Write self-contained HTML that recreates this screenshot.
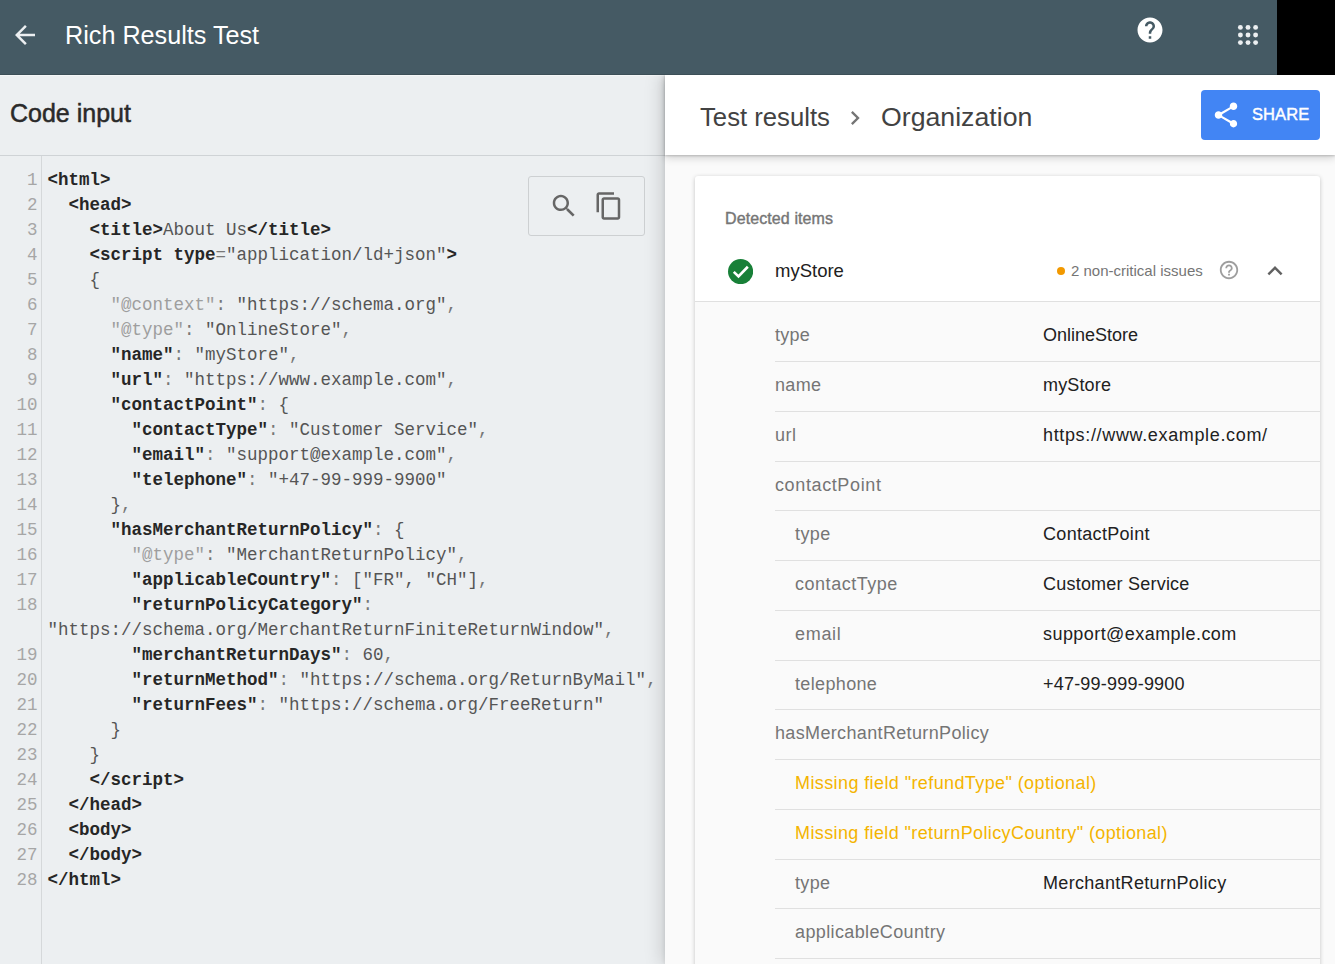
<!DOCTYPE html>
<html><head><meta charset="utf-8">
<style>
*{box-sizing:border-box;margin:0;padding:0}
html,body{width:1335px;height:964px;overflow:hidden;background:#fafafa;font-family:"Liberation Sans",sans-serif}
.abs{position:absolute}
#top{left:0;top:0;width:1335px;height:75px;background:#455a64;z-index:5;box-shadow:inset 0 -1px 0 rgba(0,0,0,.12)}
#blk{left:1277px;top:0;width:58px;height:75px;background:#000}
#title{left:65px;top:20px;font-size:25.2px;color:#fff;white-space:nowrap;line-height:30px}
#left{left:0;top:75px;width:665px;height:889px;background:#eceff1}
#codehdr{left:10px;top:23px;font-size:25px;color:#2a2a2a;line-height:30px;-webkit-text-stroke:0.5px #2a2a2a;white-space:nowrap}
#hdrline{left:0;top:80px;width:665px;height:1px;background:#cfd3d6}
#gutline{left:41px;top:81px;width:1px;height:808px;background:#d5d8da}
#code{left:0;top:93px;font-family:"Liberation Mono",monospace;font-size:17.5px;line-height:25px;white-space:pre}
.ln{position:absolute;left:0;width:37.5px;text-align:right;color:#a6a6a6}
.cl{position:absolute;left:47.5px;color:#555}
.b{font-weight:bold;color:#262626}
.g{color:#9e9e9e}
.p{color:#777}
#tools{left:528px;top:101px;width:117px;height:60px;border:1px solid #cdd0d2;border-radius:3px}
#right{left:665px;top:75px;width:670px;height:889px;background:#fafafa;box-shadow:-1px 0 4px rgba(0,0,0,.08),-5px 0 16px rgba(0,0,0,.13)}
#rhdr{left:0;top:0;width:670px;height:80px;background:#fff;box-shadow:0 1px 2px rgba(0,0,0,.18),0 3px 8px rgba(0,0,0,.16);z-index:2}
.crumb{top:26.5px;font-size:26px;color:#424242;line-height:30px;white-space:nowrap}
#share{left:536px;top:15px;width:119px;height:50px;background:#4285f4;border-radius:4px}
#sharetxt{left:51px;top:14px;font-size:16.5px;color:#fff;-webkit-text-stroke:0.45px #fff;letter-spacing:0.1px;line-height:20px}
#card{left:30px;top:101px;width:625px;height:800px;background:#fff;border-radius:3px;box-shadow:0 1px 4px rgba(0,0,0,.22);overflow:hidden}
#det{left:30px;top:33px;font-size:16px;letter-spacing:0.1px;line-height:20px;color:#757575;-webkit-text-stroke:0.4px #757575;white-space:nowrap}
#ms{left:80px;top:84.5px;font-size:18.5px;line-height:20px;color:#212121;white-space:nowrap}
#iss{left:376px;top:84.8px;font-size:15px;line-height:20px;color:#757575;white-space:nowrap}
#div0{left:0;top:125px;width:625px;height:1px;background:#e0e0e0}
#tbl{left:0;top:126px;width:625px;height:700px;background:#fafafa}
.tr{position:absolute;left:80px;width:545px;height:49.75px;border-bottom:1px solid #e0e0e0}
.lab{position:absolute;top:13.2px;font-size:18px;line-height:20px;color:#757575;white-space:nowrap}
.val{position:absolute;left:268px;top:13.2px;font-size:18px;line-height:20px;color:#212121;white-space:nowrap}
.warn{color:#f4b400}
</style></head><body>
<div id="top" class="abs">
  <svg class="abs" style="left:10px;top:20px" width="30" height="30" viewBox="0 0 24 24"><path fill="#eceff1" d="M20 11H7.83l5.59-5.59L12 4l-8 8 8 8 1.41-1.41L7.83 13H20v-2z"/></svg>
  <div id="title" class="abs">Rich Results Test</div>
  <svg class="abs" style="left:1135px;top:15px" width="30" height="30" viewBox="0 0 24 24"><path fill="#fff" d="M12 2C6.48 2 2 6.48 2 12s4.48 10 10 10 10-4.48 10-10S17.52 2 12 2zm1 17h-2v-2h2v2zm2.07-7.75l-.9.92C13.45 12.9 13 13.5 13 15h-2v-.5c0-1.1.45-2.1 1.17-2.83l1.24-1.26c.37-.36.59-.86.59-1.41 0-1.1-.9-2-2-2s-2 .9-2 2H8c0-2.21 1.79-4 4-4s4 1.79 4 4c0 .88-.36 1.68-.93 2.25z"/></svg>
  <svg class="abs" style="left:1233px;top:20px" width="30" height="30" viewBox="0 0 30 30" fill="#eceff1">
    <circle cx="7.4" cy="7.4" r="2.45"/><circle cx="15" cy="7.4" r="2.45"/><circle cx="22.6" cy="7.4" r="2.45"/>
    <circle cx="7.4" cy="15" r="2.45"/><circle cx="15" cy="15" r="2.45"/><circle cx="22.6" cy="15" r="2.45"/>
    <circle cx="7.4" cy="22.6" r="2.45"/><circle cx="15" cy="22.6" r="2.45"/><circle cx="22.6" cy="22.6" r="2.45"/>
  </svg>
  <div id="blk" class="abs"></div>
</div>

<div id="left" class="abs">
  <div id="codehdr" class="abs">Code input</div>
  <div id="hdrline" class="abs"></div>
  <div class="abs" style="left:0;top:0;width:665px;height:1px;background:#f4f6f7"></div>
  <div id="gutline" class="abs"></div>
  <div id="code" class="abs">
<div class="ln" style="top:0px">1</div>
<div class="cl" style="top:0px"><span class="b">&lt;html&gt;</span></div>
<div class="ln" style="top:25px">2</div>
<div class="cl" style="top:25px">  <span class="b">&lt;head&gt;</span></div>
<div class="ln" style="top:50px">3</div>
<div class="cl" style="top:50px">    <span class="b">&lt;title&gt;</span>About Us<span class="b">&lt;/title&gt;</span></div>
<div class="ln" style="top:75px">4</div>
<div class="cl" style="top:75px">    <span class="b">&lt;script type</span><span class="p">=</span>&quot;application/ld+json&quot;<span class="b">&gt;</span></div>
<div class="ln" style="top:100px">5</div>
<div class="cl" style="top:100px">    {</div>
<div class="ln" style="top:125px">6</div>
<div class="cl" style="top:125px">      <span class="g">&quot;@context&quot;</span><span class="p">: </span>&quot;https://schema.org&quot;<span class="p">,</span></div>
<div class="ln" style="top:150px">7</div>
<div class="cl" style="top:150px">      <span class="g">&quot;@type&quot;</span><span class="p">: </span>&quot;OnlineStore&quot;<span class="p">,</span></div>
<div class="ln" style="top:175px">8</div>
<div class="cl" style="top:175px">      <span class="b">&quot;name&quot;</span><span class="p">: </span>&quot;myStore&quot;<span class="p">,</span></div>
<div class="ln" style="top:200px">9</div>
<div class="cl" style="top:200px">      <span class="b">&quot;url&quot;</span><span class="p">: </span>&quot;https://www.example.com&quot;<span class="p">,</span></div>
<div class="ln" style="top:225px">10</div>
<div class="cl" style="top:225px">      <span class="b">&quot;contactPoint&quot;</span><span class="p">: </span>{</div>
<div class="ln" style="top:250px">11</div>
<div class="cl" style="top:250px">        <span class="b">&quot;contactType&quot;</span><span class="p">: </span>&quot;Customer Service&quot;<span class="p">,</span></div>
<div class="ln" style="top:275px">12</div>
<div class="cl" style="top:275px">        <span class="b">&quot;email&quot;</span><span class="p">: </span>&quot;support@example.com&quot;<span class="p">,</span></div>
<div class="ln" style="top:300px">13</div>
<div class="cl" style="top:300px">        <span class="b">&quot;telephone&quot;</span><span class="p">: </span>&quot;+47-99-999-9900&quot;</div>
<div class="ln" style="top:325px">14</div>
<div class="cl" style="top:325px">      }<span class="p">,</span></div>
<div class="ln" style="top:350px">15</div>
<div class="cl" style="top:350px">      <span class="b">&quot;hasMerchantReturnPolicy&quot;</span><span class="p">: </span>{</div>
<div class="ln" style="top:375px">16</div>
<div class="cl" style="top:375px">        <span class="g">&quot;@type&quot;</span><span class="p">: </span>&quot;MerchantReturnPolicy&quot;<span class="p">,</span></div>
<div class="ln" style="top:400px">17</div>
<div class="cl" style="top:400px">        <span class="b">&quot;applicableCountry&quot;</span><span class="p">: </span>[&quot;FR&quot;, &quot;CH&quot;]<span class="p">,</span></div>
<div class="ln" style="top:425px">18</div>
<div class="cl" style="top:425px">        <span class="b">&quot;returnPolicyCategory&quot;</span><span class="p">:</span></div>
<div class="cl" style="top:450px">&quot;https://schema.org/MerchantReturnFiniteReturnWindow&quot;<span class="p">,</span></div>
<div class="ln" style="top:475px">19</div>
<div class="cl" style="top:475px">        <span class="b">&quot;merchantReturnDays&quot;</span><span class="p">: </span>60<span class="p">,</span></div>
<div class="ln" style="top:500px">20</div>
<div class="cl" style="top:500px">        <span class="b">&quot;returnMethod&quot;</span><span class="p">: </span>&quot;https://schema.org/ReturnByMail&quot;<span class="p">,</span></div>
<div class="ln" style="top:525px">21</div>
<div class="cl" style="top:525px">        <span class="b">&quot;returnFees&quot;</span><span class="p">: </span>&quot;https://schema.org/FreeReturn&quot;</div>
<div class="ln" style="top:550px">22</div>
<div class="cl" style="top:550px">      }</div>
<div class="ln" style="top:575px">23</div>
<div class="cl" style="top:575px">    }</div>
<div class="ln" style="top:600px">24</div>
<div class="cl" style="top:600px">    <span class="b">&lt;/script&gt;</span></div>
<div class="ln" style="top:625px">25</div>
<div class="cl" style="top:625px">  <span class="b">&lt;/head&gt;</span></div>
<div class="ln" style="top:650px">26</div>
<div class="cl" style="top:650px">  <span class="b">&lt;body&gt;</span></div>
<div class="ln" style="top:675px">27</div>
<div class="cl" style="top:675px">  <span class="b">&lt;/body&gt;</span></div>
<div class="ln" style="top:700px">28</div>
<div class="cl" style="top:700px"><span class="b">&lt;/html&gt;</span></div>
  </div>
  <div id="tools" class="abs">
    <svg class="abs" style="left:20px;top:14px" width="30" height="30" viewBox="0 0 24 24"><path fill="#666" d="M15.5 14h-.79l-.28-.27C15.41 12.59 16 11.11 16 9.5 16 5.91 13.09 3 9.5 3S3 5.910 3 9.5 5.91 16 9.5 16c1.61 0 3.09-.59 4.23-1.57l.27.28v.79l5 4.99L20.490 19l-4.99-5zm-6 0C7.01 14 5 11.99 5 9.5S7.01 5 9.5 5 14 7.01 14 9.5 11.99 14 9.5 14z"/></svg>
    <svg class="abs" style="left:65px;top:14px" width="30" height="30" viewBox="0 0 24 24"><path fill="#666" d="M16 1H4c-1.1 0-2 .9-2 2v14h2V3h12V1zm3 4H8c-1.1 0-2 .9-2 2v14c0 1.1.9 2 2 2h11c1.1 0 2-.9 2-2V7c0-1.1-.9-2-2-2zm0 16H8V7h11v14z"/></svg>
  </div>
</div>

<div id="right" class="abs">
  <div id="card" class="abs">
<div class="abs" id="det">Detected items</div>
<svg class="abs" style="left:32.7px;top:82.7px" width="25.2" height="25.2" viewBox="0 0 24 24"><circle cx="12" cy="12" r="12" fill="#188038"/><path d="M5.5 12.3L10 16.6L18.9 7.4" stroke="#fff" stroke-width="2.5" fill="none"/></svg>
<div class="abs" id="ms">myStore</div>
<div class="abs" style="left:362px;top:91px;width:8px;height:8px;border-radius:50%;background:#f29900"></div>
<div class="abs" id="iss">2 non-critical issues</div>
<svg class="abs" style="left:522.6px;top:83.4px" width="22" height="22" viewBox="0 0 24 24"><path fill="#9e9e9e" d="M11 18h2v-2h-2v2zm1-16C6.48 2 2 6.48 2 12s4.48 10 10 10 10-4.48 10-10S17.52 2 12 2zm0 18c-4.41 0-8-3.59-8-8s3.59-8 8-8 8 3.59 8 8-3.59 8-8 8zm0-14c-2.21 0-4 1.790-4 4h2c0-1.1.9-2 2-2s2 .9 2 2c0 2-3 1.75-3 5h2c0-2.25 3-2.5 3-5 0-2.21-1.79-4-4-4z"/></svg>
<svg class="abs" style="left:565px;top:80px" width="30" height="30" viewBox="0 0 24 24"><path fill="#616161" d="M12 8l-6 6 1.41 1.41L12 10.83l4.59 4.58L18 14z"/></svg>
<div class="abs" id="div0"></div>
<div class="abs" id="tbl">
<div class="tr" style="top:10.25px">
<div class="lab" style="left:0px;letter-spacing:0.25px">type</div>
<div class="val" style="letter-spacing:0px">OnlineStore</div>
</div>
<div class="tr" style="top:60.00px">
<div class="lab" style="left:0px;letter-spacing:0.35px">name</div>
<div class="val" style="letter-spacing:0.15px">myStore</div>
</div>
<div class="tr" style="top:109.75px">
<div class="lab" style="left:0px;letter-spacing:0.5px">url</div>
<div class="val" style="letter-spacing:0.65px">https://www.example.com/</div>
</div>
<div class="tr" style="top:159.50px">
<div class="lab" style="left:0px;letter-spacing:0.62px">contactPoint</div>
</div>
<div class="tr" style="top:209.25px">
<div class="lab" style="left:20px;letter-spacing:0.4px">type</div>
<div class="val" style="letter-spacing:0.31px">ContactPoint</div>
</div>
<div class="tr" style="top:259.00px">
<div class="lab" style="left:20px;letter-spacing:0.53px">contactType</div>
<div class="val" style="letter-spacing:0.22px">Customer Service</div>
</div>
<div class="tr" style="top:308.75px">
<div class="lab" style="left:20px;letter-spacing:0.7px">email</div>
<div class="val" style="letter-spacing:0.44px">support@example.com</div>
</div>
<div class="tr" style="top:358.50px">
<div class="lab" style="left:20px;letter-spacing:0.35px">telephone</div>
<div class="val" style="letter-spacing:0.21px">+47-99-999-9900</div>
</div>
<div class="tr" style="top:408.25px">
<div class="lab" style="left:0px;letter-spacing:0.35px">hasMerchantReturnPolicy</div>
</div>
<div class="tr" style="top:458.00px">
<div class="lab warn" style="left:20px;letter-spacing:0.4px">Missing field &quot;refundType&quot; (optional)</div>
</div>
<div class="tr" style="top:507.75px">
<div class="lab warn" style="left:20px;letter-spacing:0.39px">Missing field &quot;returnPolicyCountry&quot; (optional)</div>
</div>
<div class="tr" style="top:557.50px">
<div class="lab" style="left:20px;letter-spacing:0.33px">type</div>
<div class="val" style="letter-spacing:0.32px">MerchantReturnPolicy</div>
</div>
<div class="tr" style="top:607.25px">
<div class="lab" style="left:20px;letter-spacing:0.37px">applicableCountry</div>
</div>
<div class="tr" style="top:657.00px">
<div class="lab" style="left:20px;letter-spacing:0px"></div>
</div>
</div>
  </div>
  <div id="rhdr" class="abs">
    <div class="abs crumb" style="left:35px;font-size:25.7px">Test results</div>
    <svg class="abs" style="left:176px;top:29px" width="28" height="28" viewBox="0 0 24 24"><path fill="#757575" d="M10 6L8.59 7.41 13.17 12l-4.58 4.59L10 18l6-6z"/></svg>
    <div class="abs crumb" style="left:216px;font-size:26.7px">Organization</div>
    <div id="share" class="abs">
      <svg class="abs" style="left:10px;top:10px" width="30" height="30" viewBox="0 0 24 24"><path fill="#fff" d="M18 16.08c-.76 0-1.44.3-1.96.77L8.91 12.7c.05-.23.09-.46.09-.7s-.04-.47-.09-.7l7.05-4.11c.54.5 1.25.81 2.04.81 1.66 0 3-1.34 3-3s-1.34-3-3-3-3 1.34-3 3c0 .24.04.47.09.7L8.04 9.81C7.5 9.31 6.79 9 6 9c-1.66 0-3 1.34-3 3s1.34 3 3 3c.79 0 1.5-.31 2.04-.81l7.12 4.16c-.05.21-.08.43-.08.65 0 1.61 1.31 2.92 2.92 2.92 1.61 0 2.92-1.31 2.92-2.92s-1.31-2.92-2.92-2.92z"/></svg>
      <div id="sharetxt" class="abs">SHARE</div>
    </div>
  </div>
</div>
</body></html>
